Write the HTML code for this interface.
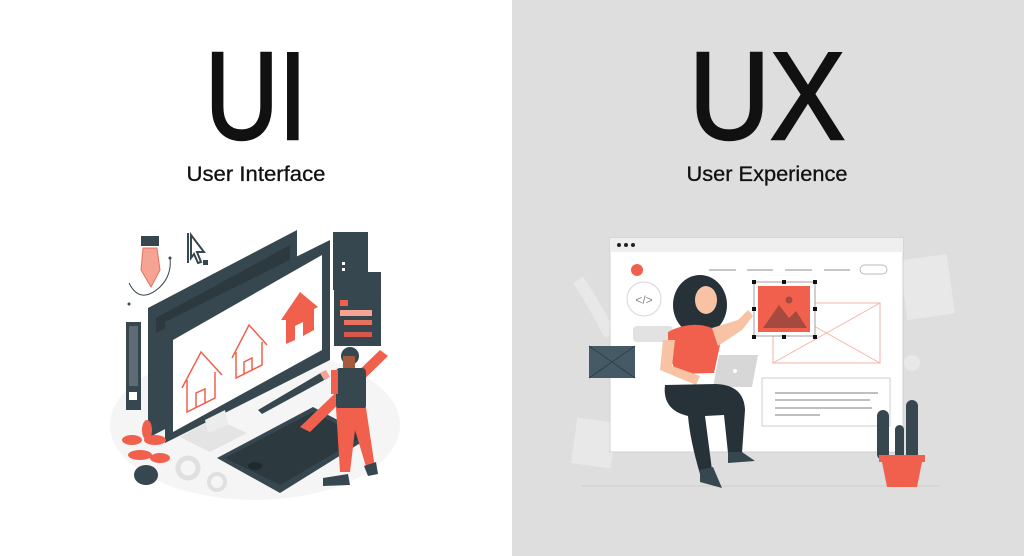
<!DOCTYPE html>
<html><head><meta charset="utf-8"><style>
html,body{margin:0;padding:0;width:1024px;height:556px;overflow:hidden;background:#fff}
svg{display:block}
</style></head><body>
<svg width="1024" height="556" viewBox="0 0 1024 556" xmlns="http://www.w3.org/2000/svg" font-family="Liberation Sans, sans-serif">
<rect x="0" y="0" width="512" height="556" fill="#ffffff"/>
<rect x="512" y="0" width="512" height="556" fill="#dedede"/>

<text x="256" y="139" text-anchor="middle" font-size="124" fill="#111" stroke="#111" stroke-width="2.5" textLength="102" lengthAdjust="spacingAndGlyphs">UI</text>
<text x="256" y="181" text-anchor="middle" font-size="21" fill="#111" stroke="#111" stroke-width="0.3" textLength="139" lengthAdjust="spacingAndGlyphs">User Interface</text>
<text x="767" y="139" text-anchor="middle" font-size="124" fill="#111" stroke="#111" stroke-width="2.5" textLength="156" lengthAdjust="spacingAndGlyphs">UX</text>
<text x="767" y="181" text-anchor="middle" font-size="21" fill="#111" stroke="#111" stroke-width="0.3" textLength="161" lengthAdjust="spacingAndGlyphs">User Experience</text>

<!-- LEFT ILLUSTRATION -->
<ellipse cx="255" cy="425" rx="145" ry="75" fill="#f5f5f5"/>
<rect x="141" y="236" width="18" height="10" fill="#37474f"/>
<path d="M143 248 L157 248 L160 270 L151 287 L141 270 Z" fill="#f5a493" stroke="#e8705e" stroke-width="1"/>
<path d="M129 283 Q140 305 160 287 Q172 275 170 258" fill="none" stroke="#37474f" stroke-width="1"/>
<circle cx="129" cy="304" r="1.5" fill="#37474f"/><circle cx="170" cy="258" r="1.5" fill="#37474f"/>
<path d="M188 233 L188 263 M191 235 L204 252 L197 252 L201 262 L198 263 L194 254 L191 258 Z" fill="#fff" stroke="#37474f" stroke-width="2"/>
<rect x="203" y="260" width="5" height="5" fill="#37474f"/>
<rect x="126" y="322" width="15" height="88" fill="#37474f"/>
<rect x="129" y="326" width="9" height="60" fill="#5f6b72"/>
<rect x="129" y="392" width="8" height="8" fill="#fff"/>
<path d="M148 308 L297 230 L297 360 L148 438 Z" fill="#37474f"/>
<path d="M156 318 L290 245 L290 260 L156 333 Z" fill="#2c393f"/>
<path d="M165 322 L330 240 L330 360 L165 443 Z" fill="#37474f"/>
<path d="M173 340 L322 255 L322 350 L173 432 Z" fill="#ffffff"/>
<path d="M182 388 L201 352 L222 375 M187 380 L187 412 L215 398 L215 372 M196 408 L196 393 L205 389 L205 404" fill="none" stroke="#f0604d" stroke-width="1.5"/>
<path d="M232 358 L249 325 L267 345 M236 352 L236 378 L262 365 L262 342 M244 374 L244 362 L252 358 L252 370" fill="none" stroke="#f0604d" stroke-width="1.5"/>
<path d="M281 320 L300 292 L318 307 L314 309 L314 330 L303 336 L303 322 L295 326 L295 340 L286 344 L286 320 Z" fill="#f0604d"/>
<path d="M180 437 L215 418 L247 433 L210 452 Z" fill="#e4e4e4"/>
<path d="M205 420 L225 410 L228 425 L208 433 Z" fill="#ececec"/>
<rect x="333" y="232" width="35" height="58" fill="#37474f"/>
<g fill="#fff"><rect x="342" y="262" width="3" height="3"/><rect x="342" y="268" width="3" height="3"/><rect x="342" y="274" width="3" height="3"/><rect x="342" y="280" width="3" height="3"/></g>
<rect x="334" y="272" width="47" height="74" fill="#37474f"/>
<rect x="340" y="300" width="8" height="6" fill="#f0604d"/>
<rect x="340" y="310" width="32" height="6" fill="#f5a493"/>
<rect x="344" y="320" width="28" height="5" fill="#e8705e"/>
<rect x="344" y="332" width="28" height="5" fill="#d9574a"/>
<path d="M217 458 L313 407 L370 437 L280 493 Z" fill="#37474f"/>
<path d="M225 458 L313 412 L362 437 L280 485 Z" fill="#2c393f"/>
<ellipse cx="255" cy="466" rx="7" ry="4" fill="#1f2a2f"/>
<path d="M258 410 L324 371 L328 378 L262 414 Z" fill="#37474f"/>
<path d="M320 373 L326 370 L330 377 L324 380 Z" fill="#f5a493"/>
<path d="M300 427 L380 350 L388 356 L310 432 Z" fill="#f0604d"/>
<circle cx="350" cy="356" r="9" fill="#37474f"/>
<rect x="343" y="356" width="12" height="14" fill="#a65c3c"/>
<rect x="336" y="368" width="30" height="42" rx="4" fill="#37474f"/>
<rect x="331" y="370" width="7" height="24" fill="#f0604d"/>
<path d="M336 408 L366 408 L375 468 L367 470 L355 430 L350 472 L340 472 Z" fill="#f0604d"/>
<path d="M323 478 L348 474 L350 485 L323 486 Z M364 466 L376 462 L378 474 L368 476 Z" fill="#37474f"/>
<ellipse cx="146" cy="475" rx="12" ry="10" fill="#37474f"/>
<g fill="#f0604d"><ellipse cx="132" cy="440" rx="10" ry="5"/><ellipse cx="155" cy="440" rx="11" ry="5"/><ellipse cx="140" cy="455" rx="12" ry="5"/><ellipse cx="160" cy="458" rx="10" ry="5"/><ellipse cx="147" cy="430" rx="5" ry="10"/></g>
<circle cx="188" cy="468" r="10" fill="none" stroke="#e0e0e0" stroke-width="5"/>
<circle cx="217" cy="482" r="8" fill="none" stroke="#e0e0e0" stroke-width="4"/>

<!-- RIGHT ILLUSTRATION -->
<line x1="582" y1="486" x2="940" y2="486" stroke="#cfcfcf" stroke-width="1"/>
<rect x="903" y="257" width="48" height="60" fill="#e8e8e8" transform="rotate(-8 927 287)"/>
<rect x="574" y="420" width="40" height="46" fill="#e8e8e8" transform="rotate(8 594 443)"/>
<path d="M578 280 Q592 300 610 335" stroke="#e8e8e8" stroke-width="12" fill="none"/>
<circle cx="912" cy="363" r="8" fill="#e8e8e8"/>
<rect x="610" y="238" width="293" height="214" fill="#ffffff" stroke="#d0d0d0"/>
<rect x="610" y="238" width="293" height="14" fill="#efefef"/>
<g fill="#222"><circle cx="619" cy="245" r="2"/><circle cx="626" cy="245" r="2"/><circle cx="633" cy="245" r="2"/></g>
<circle cx="637" cy="270" r="6" fill="#f0604d"/>
<circle cx="644" cy="299" r="17" fill="#fff" stroke="#d6d6d6"/>
<text x="644" y="304" text-anchor="middle" font-size="12" fill="#888">&lt;/&gt;</text>
<rect x="633" y="326" width="40" height="16" rx="4" fill="#e2e2e2"/>
<g stroke="#c8c8c8" stroke-width="2"><line x1="709" y1="270" x2="736" y2="270"/><line x1="747" y1="270" x2="773" y2="270"/><line x1="785" y1="270" x2="812" y2="270"/><line x1="824" y1="270" x2="850" y2="270"/></g>
<rect x="860" y="265" width="27" height="9" rx="4.5" fill="#fff" stroke="#bbb"/>
<rect x="773" y="303" width="107" height="60" fill="none" stroke="#f7b2a6"/>
<path d="M773 303 L880 363 M880 303 L773 363" stroke="#f7b2a6"/>
<rect x="754" y="282" width="61" height="54" fill="#fff" stroke="#888" stroke-width="0.8"/>
<rect x="758" y="286" width="52" height="46" fill="#f0604d"/>
<path d="M763 328 L779 305 L789 318 L796 311 L807 328 Z" fill="#a64a3f"/>
<circle cx="789" cy="300" r="3.5" fill="#a64a3f"/>
<g fill="#111"><rect x="752" y="280" width="4" height="4"/><rect x="782" y="280" width="4" height="4"/><rect x="813" y="280" width="4" height="4"/><rect x="752" y="307" width="4" height="4"/><rect x="813" y="307" width="4" height="4"/><rect x="752" y="335" width="4" height="4"/><rect x="782" y="335" width="4" height="4"/><rect x="813" y="335" width="4" height="4"/></g>
<rect x="762" y="378" width="128" height="48" fill="#fff" stroke="#cfcfcf"/>
<g stroke="#aaa" stroke-width="1.5"><line x1="775" y1="393" x2="878" y2="393"/><line x1="775" y1="400" x2="870" y2="400"/><line x1="775" y1="408" x2="872" y2="408"/><line x1="775" y1="415" x2="820" y2="415"/></g>
<rect x="589" y="346" width="46" height="32" fill="#455a64"/>
<path d="M589 346 L635 378 M635 346 L589 378" stroke="#2f3e45"/>
<rect x="877" y="410" width="12" height="50" rx="6" fill="#37474f"/>
<rect x="906" y="400" width="12" height="60" rx="6" fill="#37474f"/>
<rect x="895" y="425" width="9" height="35" rx="4.5" fill="#37474f"/>
<rect x="879" y="455" width="46" height="7" fill="#f0604d"/>
<path d="M882 462 L922 462 L917 487 L887 487 Z" fill="#f0604d"/>
<ellipse cx="700" cy="305" rx="27" ry="30" fill="#263238"/>
<ellipse cx="706" cy="300" rx="11" ry="14" fill="#f7c3a4"/>
<path d="M688 292 Q700 280 716 290 L716 284 Q702 272 686 286 Z" fill="#263238"/>
<path d="M668 332 Q690 320 712 328 L720 345 L714 373 L676 374 L668 350 Z" fill="#f0604d"/>
<path d="M712 328 L738 320 L748 310 L753 316 L742 330 L718 346 Z" fill="#f7c3a4"/>
<path d="M663 340 L675 340 L672 366 L700 376 L696 385 L660 370 Z" fill="#f7c3a4"/>
<path d="M719 355 L758 355 L752 387 L713 387 Z" fill="#d7d7d7"/>
<circle cx="735" cy="371" r="2" fill="#fff"/>
<path d="M665 385 L716 384 Q744 385 745 410 L742 453 L728 453 L724 415 L705 416 L712 470 L700 474 Q690 440 688 416 Q662 410 665 385 Z" fill="#263238"/>
<path d="M728 452 L742 452 L755 461 L728 463 Z" fill="#37474f"/>
<path d="M700 470 L713 467 L722 488 L700 482 Z" fill="#37474f"/>
</svg>
</body></html>
